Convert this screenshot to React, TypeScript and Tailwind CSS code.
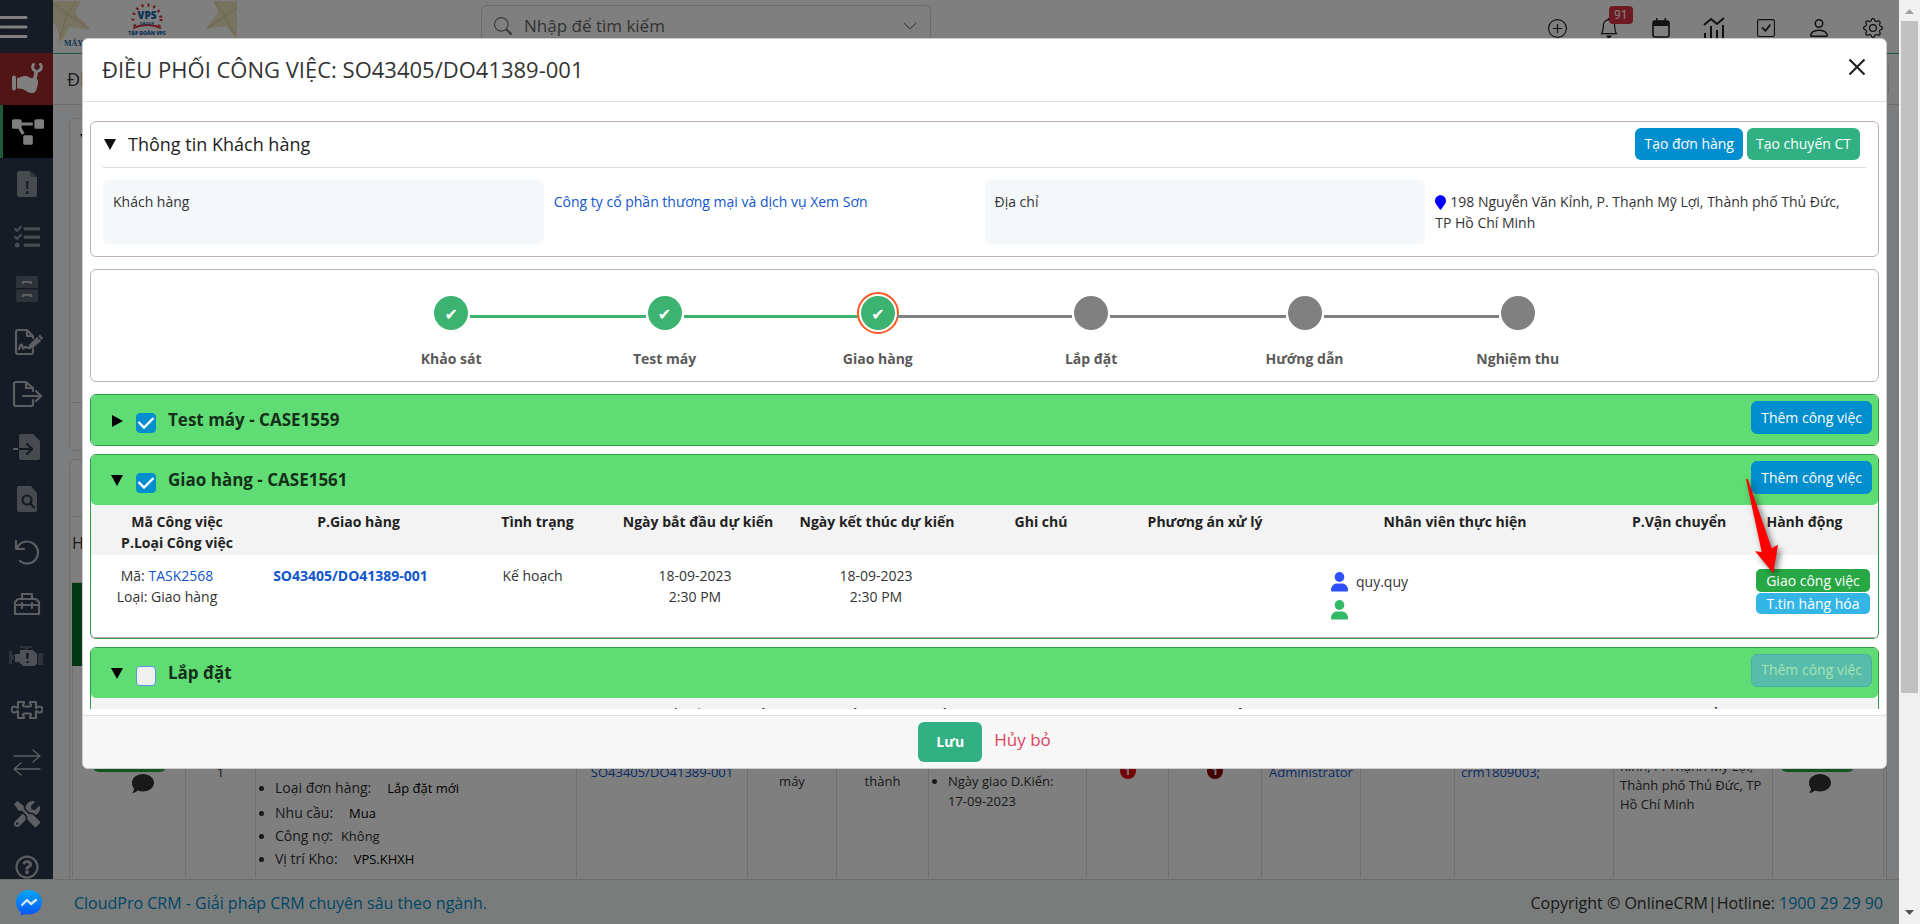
import type { ReactNode } from "react"
import { BsBell, BsCheckSquare, BsChevronDown, BsGear, BsPerson, BsPlusCircle, BsSearch } from "react-icons/bs"
import { FaMapMarker, FaProjectDiagram, FaRegQuestionCircle, FaTasks, FaTools } from "react-icons/fa"

const steps = [
  { label: "Khảo sát", done: true },
  { label: "Test máy", done: true },
  { label: "Giao hàng", done: true, current: true },
  { label: "Lắp đặt", done: false },
  { label: "Hướng dẫn", done: false },
  { label: "Nghiệm thu", done: false },
]

const line = {
  fill: "none",
  stroke: "currentColor",
  strokeWidth: 2.2,
  strokeLinecap: "round" as const,
  strokeLinejoin: "round" as const,
}

function Glyph({ children }: { children: ReactNode }) {
  return (
    <svg className="h-8 w-8" viewBox="0 0 32 32" aria-hidden="true">
      {children}
    </svg>
  )
}

const menu: { name: string; icon: ReactNode }[] = [
  {
    name: "Cảnh báo",
    icon: (
      <Glyph>
        <path fill="currentColor" d="M8 3h11l1 6h6v18a2 2 0 0 1-2 2H8a2 2 0 0 1-2-2V5a2 2 0 0 1 2-2z" opacity=".7" />
        <path fill="currentColor" d="M20 3l6 6h-6z" opacity=".4" />
        <path fill="#2a384a" d="M15 13h2.500l-.5 8h-1.500zM16.200 23a1.500 1.500 0 1 1 0 3 1.500 1.500 0 0 1 0-3z" />
      </Glyph>
    ),
  },
  { name: "Công việc", icon: <FaTasks className="h-[26px] w-[26px] opacity-70" /> },
  {
    name: "Lưu trữ",
    icon: (
      <Glyph>
        <path fill="currentColor" opacity=".35" d="M7 3h18a2 2 0 0 1 2 2v10H5V5a2 2 0 0 1 2-2zM5 16.500h22V27a2 2 0 0 1-2 2H7a2 2 0 0 1-2-2z" />
        <path d="M12 11V9h8v2M12 24v-2h8v2" {...line} strokeLinecap="butt" />
      </Glyph>
    ),
  },
  {
    name: "Hợp đồng",
    icon: (
      <Glyph>
        <path d="M22 23v3a2 2 0 0 1-2 2H7a2 2 0 0 1-2-2V6a2 2 0 0 1 2-2h9l6 6v2M16 4v6h6M8 23c2-6 3-5 3.500-2s1.500 1 2.500 0 2 1 4 1" {...line} />
        <path fill="currentColor" d="M18 19l8-8 4 4-8 7-4 1zM27 10l2-1.500L32 12l-1.500 2z" />
      </Glyph>
    ),
  },
  {
    name: "Xuất",
    icon: (
      <Glyph>
        <path d="M22 22v4a2 2 0 0 1-2 2H5a2 2 0 0 1-2-2V6a2 2 0 0 1 2-2h10l7 6v3M15 4v6h7M12 18h17M25 13l5 5-5 5" {...line} />
      </Glyph>
    ),
  },
  {
    name: "Nhập",
    icon: (
      <Glyph>
        <path fill="currentColor" opacity=".7" d="M10 3h12l7 7v17a2 2 0 0 1-2 2H10a2 2 0 0 1-2-2V5a2 2 0 0 1 2-2z" />
        <path d="M3 18h5" {...line} />
        <path d="M8 18h12M16 13l5 5-5 5" {...line} stroke="#2a384a" />
      </Glyph>
    ),
  },
  {
    name: "Tra cứu",
    icon: (
      <Glyph>
        <path fill="currentColor" opacity=".7" d="M8 3h12l6 7v17a2 2 0 0 1-2 2H8a2 2 0 0 1-2-2V5a2 2 0 0 1 2-2z" />
        <circle cx="16" cy="17" r="4.500" {...line} stroke="#2a384a" />
        <path d="M19.500 20.500l3.500 4" {...line} stroke="#2a384a" />
      </Glyph>
    ),
  },
  {
    name: "Hoàn tác",
    icon: (
      <Glyph>
        <path d="M5 5v8h8M6 12a11 11 0 1 1 3 13" {...line} />
      </Glyph>
    ),
  },
  {
    name: "Thiết bị",
    icon: (
      <Glyph>
        <path d="M4 17v-3l3-3h18l3 3v12H4V17h24M11 11V6h10v5M11 15v5M21 15v5" {...line} />
      </Glyph>
    ),
  },
  {
    name: "Sự cố",
    icon: (
      <svg className="h-8 w-9" viewBox="-2 0 36 32">
        <path fill="currentColor" opacity=".8" d="M9 9h13l4 4v10l-3 2H12l-4-4H4v-8h5z" />
        <path fill="currentColor" opacity=".35" d="M-2 10h3v4h2v5H1v4h-3zM9 5h12v2h-4v2h-3V7H9zM27 12h5v12h-5z" />
        <path fill="#2a384a" d="M15 12h3l-.5 6h-2zM15.500 20h2v2h-2z" />
      </svg>
    ),
  },
  {
    name: "Tiện ích",
    icon: (
      <Glyph>
        <path d="M7 9h6c0 2-1 2-1 3.500s8 1.500 8 0S19 11 19 9h6v6c1 0 2-1.500 3.500-1.500s3 1 3 3-1.500 3-3 3S26 18 25 18v7h-6c0-2 1-2 1-3.500s-8-1.500-8 0 1 1.500 1 3.500H7v-7c-1 0-2 1.500-3.500 1.500s-3-1-3-3 1.500-3 3-3S6 15 7 15z" {...line} />
      </Glyph>
    ),
  },
  {
    name: "Chuyển đổi",
    icon: (
      <Glyph>
        <path d="M3 10h26M22 4l7 6-7 6M29 23H3M10 17l-7 6 7 6" {...line} strokeWidth={1.300} />
      </Glyph>
    ),
  },
  { name: "Cài đặt", icon: <FaTools className="h-[26px] w-[26px]" /> },
  { name: "Trợ giúp", icon: <FaRegQuestionCircle className="h-6 w-6" /> },
]

function Sidebar() {
  return (
    <nav className="-mb-3.5 flex w-[53px] shrink-0 flex-col bg-[#2a384a] text-[#b9bdc2]">
      <button aria-label="Menu" className="flex h-[53px] shrink-0 items-center">
        <svg className="h-6 w-7" viewBox="0 0 28 24">
          <path stroke="#fff" strokeWidth="3" strokeLinecap="round" d="M1 2.500h25M1 12h25M1 21.500h25" />
        </svg>
      </button>
      <a href="#service" aria-label="Dịch vụ" className="flex h-[52px] shrink-0 items-center justify-center bg-[#a52a2a]">
        <svg className="h-8 w-8" viewBox="0 0 32 32" fill="#fff">
          <rect x="1" y="12.500" width="4" height="15" rx="2" />
          <path d="M6 15c4-1 6-2.500 9-2 2 .3 3 1.500 5 2 2 .4 5-.5 6 1s1.500 3 1 4.500c-.5 2-1 5-2 7-.8 1.800-3 3-5 2.500-3-.6-5-2-7.500-3.500-2-.8-4.500-.8-6.500-1z" />
          <path d="M22.500 1.500a4.300 4.300 0 1 0 7 0" fill="none" stroke="#fff" strokeWidth="3" strokeLinecap="round" />
          <path d="M25.500 8l-2 9" stroke="#fff" strokeWidth="3.600" />
        </svg>
      </a>
      <a href="#dispatch" aria-label="Điều phối" className="flex h-[53px] shrink-0 items-center justify-center border-l-3 border-[#3cb371] bg-black text-white">
        <FaProjectDiagram className="h-8 w-8" />
      </a>
      {menu.map((item) => (
        <a key={item.name} href="#menu" aria-label={item.name} className="flex min-h-0 flex-1 items-center justify-center">
          {item.icon}
        </a>
      ))}
    </nav>
  )
}

function Logo() {
  return (
    <svg className="h-[52px] w-[188px]" viewBox="0 0 188 52">
      <g fill="#f0e4c0">
        <path d="M0 1h28l-6 12 16 17-22-3-8 16-5-17-3-4z" />
        <path d="M184 1h-23l4 12-12 16 20-3 11 12z" />
      </g>
      <path d="M2 4l12 10 8-12M14 14L6 40M14 14l22 14M184 8l-12 8-10-14M172 16l-18 12M172 16l10 20" stroke="#dccb98" fill="none" />
      <circle cx="94" cy="19" r="14" fill="none" stroke="#d8303a" strokeWidth="3" strokeDasharray="2 4" />
      <path fill="#fff" d="M78 26h32v10H78z" />
      <path d="M80 28q14-6 28 0" fill="none" stroke="#d8303a" strokeWidth="2" />
      <text x="94" y="19" textAnchor="middle" fontFamily="Open Sans, sans-serif" fontSize="10" fontWeight="800" fill="#1464ac">VPS</text>
      <text x="94" y="25" textAnchor="middle" fontFamily="Open Sans, sans-serif" fontSize="4" fontWeight="700" fill="#1464ac">GROUP</text>
      <text x="94" y="35" textAnchor="middle" fontFamily="Open Sans, sans-serif" fontSize="5" fontWeight="800" fill="#1464ac">TẬP ĐOÀN VPS</text>
      <text x="11" y="46" fontFamily="Liberation Serif, serif" fontSize="8" fontWeight="700" fill="#1464ac">MÁY</text>
    </svg>
  )
}

function TopBar() {
  return (
    <header className="flex h-[54px] shrink-0 items-start justify-between border-b border-[#3cb371] bg-white">
      <Logo />
      <div className="mt-[5px] mr-auto ml-60 flex h-[42px] w-[450px] items-center gap-3 rounded-md border border-[#d5d5d5] px-3 text-[#777]">
        <BsSearch className="h-[18px] w-[18px]" />
        <input aria-label="Tìm kiếm" placeholder="Nhập để tìm kiếm" className="min-w-0 flex-1 text-[17px] outline-none placeholder:text-[#666]" />
        <BsChevronDown className="h-4 w-4" />
      </div>
      <div className="mt-4 mr-4 flex w-[335px] items-center justify-between text-[#222]">
        <button aria-label="Thêm"><BsPlusCircle className="h-[19px] w-[19px]" /></button>
        <button aria-label="Thông báo" className="relative">
          <BsBell className="h-5 w-5" />
          <span className="absolute -top-3 left-2.5 rounded-sm bg-[#dc3545] px-[5px] font-[Roboto] text-xs leading-[18px] text-white">91</span>
        </button>
        <button aria-label="Lịch">
          <svg className="h-5 w-5" viewBox="0 0 20 20">
            <path d="M2 5a2 2 0 0 1 2-2h12a2 2 0 0 1 2 2v12a2 2 0 0 1-2 2H4a2 2 0 0 1-2-2z" fill="none" stroke="currentColor" strokeWidth="1.600" />
            <path d="M2 3h16v5H2zM5 0h1.500v3H5zM13.500 0H15v3h-1.500z" fill="currentColor" />
          </svg>
        </button>
        <button aria-label="Báo cáo">
          <svg className="h-[22px] w-[22px]" viewBox="0 0 22 22" fill="none" stroke="currentColor">
            <path d="M1 8l7-6 6 5 7-6" strokeWidth="2" />
            <path d="M2 16v5M8 9v12M14 13v8M20 8v13" strokeWidth="2" />
          </svg>
        </button>
        <button aria-label="Việc cần làm"><BsCheckSquare className="h-[18px] w-[18px]" /></button>
        <button aria-label="Tài khoản"><BsPerson className="h-6 w-6" /></button>
        <button aria-label="Cấu hình"><BsGear className="h-5 w-5" /></button>
      </div>
    </header>
  )
}

function RowActions({ last }: { last?: boolean }) {
  return (
    <div className={`pt-[74px] ${last ? "pl-2" : "pl-5"}`}>
      <div className="h-8 w-[73px] rounded-md bg-[#28a745]" />
      <button aria-label="Bình luận" className={`mt-0.5 block ${last ? "ml-[28px]" : "ml-[39px]"}`}>
        <svg className="h-5 w-[22px] text-[#333]" viewBox="0 0 22 20" fill="currentColor">
          <path d="M11 0c6 0 11 3.800 11 8.700s-5 8.700-11 8.700c-1.800 0-3.500-.3-5-.9C4.500 17.600 2.500 19 .3 19c.8-1.200 1.700-2.700 1.700-4.400C.7 13 0 11 0 8.700 0 3.800 5 0 11 0z" />
        </svg>
      </button>
    </div>
  )
}

function OrderList() {
  return (
    <main className="flex min-h-0 flex-1 flex-col bg-[#f6fafe] text-[#333]">
      <div className="flex h-[51px] shrink-0 items-center justify-between border-b border-[#ddd] bg-white pr-2.5 pl-3.5">
        <h1 className="text-lg font-medium">ĐI</h1>
        <div className="h-[38px] w-28 rounded-md border border-[#ddd]" />
      </div>
      <div className="mt-[13px] mr-3 ml-4 flex h-[333px] shrink-0 flex-col justify-between rounded-md border border-[#ddd] bg-white">
        <svg className="mt-3.5 ml-2.5 h-3 w-3" viewBox="0 0 12 12"><path d="M0 1h12L6 12z" fill="#111" /></svg>
        <div className="ml-0.5 h-12 border-t border-[#ddd]" />
      </div>
      <div className="mt-2 mr-3 ml-4 flex min-h-0 flex-1 flex-col overflow-hidden rounded-t-md border-x border-t border-[#ddd] bg-white pr-[3px] pl-0.5">
        <div className="h-[57px] shrink-0 border-b border-[#ddd]" />
        <div className="h-[66px] shrink-0 border-b border-[#ddd] pt-3.5 text-base">H</div>
        <div className="h-[83px] shrink-0 bg-[#067028]" />
        <table className="h-[211px] w-full table-fixed text-[13px]">
          <colgroup>
            <col className="w-[113px]" />
            <col className="w-[70px]" />
            <col className="w-[321px]" />
            <col className="w-[171px]" />
            <col className="w-[89px]" />
            <col className="w-[92px]" />
            <col className="w-[158px]" />
            <col className="w-[82px]" />
            <col className="w-[93px]" />
            <col className="w-[99px]" />
            <col className="w-[94px]" />
            <col className="w-[159px]" />
            <col className="w-[159px]" />
            <col className="w-[111px]" />
          </colgroup>
          <tbody>
            <tr className="align-top *:border-x *:border-[#ddd]">
              <td><RowActions /></td>
              <td className="pt-[96px] text-center leading-5">1</td>
              <td>
                <ul className="list-disc pt-[111px] pl-[19px] leading-[23px]">
                  <li className="mb-0.5"><span className="mr-4 text-sm font-medium">Loại đơn hàng:</span><span className="text-black">Lắp đặt mới</span></li>
                  <li><span className="mr-4 text-sm font-medium">Nhu cầu:</span><span className="text-black">Mua</span></li>
                  <li><span className="mr-2 text-sm font-medium">Công nợ:</span>Không</li>
                  <li><span className="mr-4 text-sm font-medium">Vị trí Kho:</span><span className="text-black">VPS.KHXH</span></li>
                </ul>
              </td>
              <td className="pt-[96px] text-center leading-5"><a href="#order" className="text-[#1155cc]">SO43405/DO41389-001</a></td>
              <td className="pt-[105px] text-center leading-5">máy</td>
              <td className="pt-[105px] text-center leading-5">thành</td>
              <td>
                <ul className="list-disc pt-[105px] pl-[19px] leading-5">
                  <li>Ngày giao D.Kiến:<br />17-09-2023</li>
                </ul>
              </td>
              <td className="pt-[97px]"><span className="mx-auto block w-4 rounded-full bg-red-600 text-center text-[11px] leading-4 font-bold text-white">1</span></td>
              <td className="pt-[97px]"><span className="mx-auto block w-4 rounded-full bg-[#8b0000] text-center text-[11px] leading-4 font-bold text-white">1</span></td>
              <td className="pt-[96px] text-center leading-5"><a href="#user" className="text-[#1155cc]">Administrator</a></td>
              <td />
              <td className="pt-[96px] pl-1.5 leading-5"><a href="#case" className="text-[#1155cc]">crm1809003;</a></td>
              <td className="px-1.5 pt-[91px] leading-[19px]">Kỉnh, P. Thạnh Mỹ Lợi, Thành phố Thủ Đức, TP Hồ Chí Minh</td>
              <td><RowActions last /></td>
            </tr>
          </tbody>
        </table>
      </div>
    </main>
  )
}

function Footer() {
  return (
    <footer className="relative flex h-[45px] shrink-0 items-center border-t border-[#ddd] bg-[#f3f8f6] pt-0.5 pr-4 pl-4 text-base text-[#333]">
      <a href="#messenger" aria-label="Messenger" className="z-20 mr-8">
        <svg className="h-[26px] w-[26px]" viewBox="0 0 26 26">
          <defs>
            <linearGradient id="messenger" x1="0" y1="0" x2="0" y2="1">
              <stop offset="0" stopColor="#00a6f5" />
              <stop offset="1" stopColor="#0a55f5" />
            </linearGradient>
          </defs>
          <path fill="url(#messenger)" d="M13 0c7.300 0 13 5.300 13 12.200S20.300 24.400 13 24.400c-1.300 0-2.600-.2-3.700-.5L5 25.700l-.3-3.500C1.800 20 0 16.400 0 12.200 0 5.300 5.700 0 13 0z" />
          <path fill="none" stroke="#d8e4ec" strokeWidth="2.400" strokeLinecap="round" strokeLinejoin="round" d="M6 15l5-5 4 4 5-4" />
        </svg>
      </a>
      <a href="#cloudpro" className="text-[#008ecf]">CloudPro CRM - Giải pháp CRM chuyên sâu theo ngành.</a>
      <span className="ml-auto">Copyright © OnlineCRM|Hotline: <a href="tel:1900292990" className="text-[#008ecf]">1900 29 29 90</a></span>
    </footer>
  )
}

function CustomerPanel() {
  return (
    <section className="rounded-md border border-[#bfb0b5] px-3 pb-3">
      <div className="flex h-[46px] items-center border-b border-[#ddd] pr-1.5 pb-0.5">
        <svg className="ml-px h-3 w-3" viewBox="0 0 12 12"><path d="M0 1h12L6 12z" fill="#111" /></svg>
        <h3 className="ml-3 text-lg font-medium text-[#222]">Thông tin Khách hàng</h3>
        <button className="mr-1 ml-auto h-8 rounded-md bg-[#008ecf] px-[9px] text-sm font-medium text-white">Tạo đơn hàng</button>
        <button className="h-8 rounded-md bg-[#31b083] px-[9px] text-sm font-medium text-white">Tạo chuyến CT</button>
      </div>
      <div className="mt-3 grid min-h-[62px] grid-cols-4 text-sm leading-[21px] text-[#333] *:px-2.5 *:py-[11px]">
        <div className="rounded-md bg-[#f4f8fb]">Khách hàng</div>
        <div><a href="#customer" className="text-[#1155cc]">Công ty cổ phần thương mại và dịch vụ Xem Sơn</a></div>
        <div className="rounded-md bg-[#f4f8fb]">Địa chỉ</div>
        <div>
          <FaMapMarker className="mr-1 inline h-[15px] w-[11px] -translate-y-px text-[#0000ff]" />
          198 Nguyễn Văn Kỉnh, P. Thạnh Mỹ Lợi, Thành phố Thủ Đức, TP Hồ Chí Minh
        </div>
      </div>
    </section>
  )
}

function Stepper() {
  return (
    <section className="mt-3 rounded-md border border-[#bfb0b5] pt-[26px] pb-3">
      <ol className="mx-auto grid max-w-7xl grid-cols-6">
        {steps.map((step, i) => (
          <li key={step.label} className="flex flex-col items-center">
            <div className="flex w-full items-center gap-0.5">
              <span className={`mt-1.5 h-[3px] flex-1 ${i === 0 ? "" : step.done ? "bg-[#3cb371]" : "bg-[#808080]"}`} />
              <span
                className={`flex h-[34px] w-[34px] items-center justify-center rounded-full text-white ${
                  step.done ? "bg-[#3cb371]" : "bg-[#808080]"
                } ${step.current ? "ring-3 ring-white outline-2 outline-offset-2 outline-[#ff5722]" : ""}`}
              >
                {step.done && <span className="pt-1 font-['DejaVu_Sans'] text-base leading-none">✔</span>}
              </span>
              <span
                className={`mt-1.5 h-[3px] flex-1 ${
                  i === steps.length - 1 ? "" : steps[i + 1].done ? "bg-[#3cb371]" : "bg-[#808080]"
                }`}
              />
            </div>
            <span className="mt-[19px] text-sm leading-5 font-bold text-[#5a5a5a]">{step.label}</span>
          </li>
        ))}
      </ol>
    </section>
  )
}

type CaseProps = { title: string; open?: boolean; checked?: boolean; children?: ReactNode }

function CaseSection({ title, open, checked, children }: CaseProps) {
  return (
    <section className="relative mt-2 rounded-md border border-[#2f9a48] bg-white">
      <div className="flex h-[50px] rounded-[5px] bg-[#60dc74] pr-1.5 pl-5">
        <svg className="mt-5 h-3 w-3" viewBox="0 0 12 12">
          <path d={open ? "M0 0h12L6 11z" : "M1 0l11 6-11 6z"} fill="#000" />
        </svg>
        <label className="ml-[13px] flex gap-3">
          <span className="relative mt-[18px] h-5 w-5">
            <input
              type="checkbox"
              defaultChecked={checked}
              className="peer block h-5 w-5 appearance-none rounded border border-[#5a96e8] bg-[#efefef] checked:border-[#008ecf] checked:bg-[#008ecf]"
            />
            <svg className="pointer-events-none absolute inset-0 hidden h-5 w-5 peer-checked:block" viewBox="0 0 20 20">
              <path d="M2.500 9l5.500 5.500L17.500 5" fill="none" stroke="#fff" strokeWidth="2.400" />
            </svg>
          </span>
          <span className="mt-[13px] text-[17px] leading-6 font-bold text-[#15301a]">{title}</span>
        </label>
        <button
          disabled={!checked}
          className="mt-1.5 ml-auto h-[33px] rounded-md border border-[#008ecf] bg-[#008ecf] px-[9px] text-sm text-white disabled:border-[#4bb0a5] disabled:bg-[#58bcaa] disabled:text-[#a5e4b3]"
        >
          Thêm công việc
        </button>
      </div>
      {children}
    </section>
  )
}

function TaskTable({ children }: { children?: ReactNode }) {
  return (
    <table className="w-full table-fixed text-sm leading-[21px] text-[#333]">
      <colgroup>
        <col className="w-[172px]" />
        <col className="w-[191px]" />
        <col className="w-[167px]" />
        <col className="w-[154px]" />
        <col className="w-[204px]" />
        <col className="w-[124px]" />
        <col className="w-[204px]" />
        <col className="w-[296px]" />
        <col className="w-[152px]" />
        <col className="w-[123px]" />
      </colgroup>
      <thead>
        <tr className="bg-[#f3f3f3] align-top text-[#222] *:pt-1.5 *:pb-0.5 *:font-bold *:whitespace-nowrap">
          <th>Mã Công việc<br />P.Loại Công việc</th>
          <th>P.Giao hàng</th>
          <th>Tình trạng</th>
          <th>Ngày bắt đầu dự kiến</th>
          <th>Ngày kết thúc dự kiến</th>
          <th>Ghi chú</th>
          <th>Phương án xử lý</th>
          <th>Nhân viên thực hiện</th>
          <th>P.Vận chuyển</th>
          <th className="pr-6">Hành động</th>
        </tr>
      </thead>
      {children}
    </table>
  )
}

function UserMark({ className }: { className: string }) {
  return (
    <svg className={`h-5 w-[17px] ${className}`} viewBox="0 0 17 20" fill="currentColor">
      <ellipse cx="8.500" cy="5" rx="4.800" ry="5" />
      <path d="M0 18c0-4 3-6.500 6-6.500h5c3 0 6 2.500 6 6.500 0 1-.5 1.500-1.500 1.500h-14C.5 19.500 0 19 0 18z" />
    </svg>
  )
}

function DeliveryTasks() {
  return (
    <TaskTable>
      <tbody>
        <tr className="h-[82px] border-b border-[#bfb0b5] text-center align-top *:pt-2.5">
          <td className="pr-5">Mã: <a href="#task" className="text-[#1155cc]">TASK2568</a><br />Loại: Giao hàng</td>
          <td className="pr-4"><a href="#order" className="font-bold text-[#1155cc]">SO43405/DO41389-001</a></td>
          <td className="pr-2.5">Kế hoạch</td>
          <td className="pr-1.5">18-09-2023<br />2:30 PM</td>
          <td className="pr-0.5">18-09-2023<br />2:30 PM</td>
          <td />
          <td />
          <td className="pl-6">
            <div className="mt-1.5 flex items-center gap-2">
              <UserMark className="text-[#304ffe]" />
              quy.quy
            </div>
            <div className="mt-2 flex">
              <UserMark className="text-[#33b866]" />
            </div>
          </td>
          <td />
          <td>
            <div className="mt-1 flex flex-col gap-px pr-2 pl-px text-sm text-white">
              <button className="h-[23px] rounded-[5px] bg-[#28a745] leading-[22px] font-medium">Giao công việc</button>
              <button className="h-[21px] rounded-[5px] bg-[#33b5e5] leading-5 font-medium">T.tin hàng hóa</button>
            </div>
          </td>
        </tr>
      </tbody>
    </TaskTable>
  )
}

function DispatchDialog() {
  return (
    <div className="absolute inset-0 z-10 bg-black/50 pt-[38px] pr-3 pl-[82px]">
      <div role="dialog" aria-label="Điều phối công việc" className="flex flex-col overflow-hidden rounded-md border border-[#ccc] bg-white">
        <div className="flex h-[63px] items-center justify-between border-b border-[#e0e0e0] pr-5 pb-0.5 pl-[19px]">
          <h2 className="text-[22px] font-medium text-[#333]">ĐIỀU PHỐI CÔNG VIỆC: SO43405/DO41389-001</h2>
          <button aria-label="Đóng" className="-mt-1">
            <svg className="h-[18px] w-[18px]" viewBox="0 0 18 18">
              <path d="M1.500 1.500l15 15M16.500 1.500l-15 15" stroke="#222" strokeWidth="2.200" />
            </svg>
          </button>
        </div>
        <div className="max-h-[calc(100vh-317px)] overflow-hidden px-[7px] pt-[19px]">
          <CustomerPanel />
          <Stepper />
          <div className="pt-1">
            <CaseSection title="Test máy - CASE1559" checked />
            <CaseSection title="Giao hàng - CASE1561" open checked>
              <DeliveryTasks />
              {/* pointer to the assign button */}
              <svg className="pointer-events-none absolute top-5 right-[88px] h-[102px] w-[50px] drop-shadow-[3px_3px_3px_rgba(0,0,0,0.5)]" viewBox="0 0 50 102">
                <path fill="#f00" d="M6 4.300l1.700-.6 24 69.600 6.300-3.600-4.700 28.600L15 76.300l6.700.7z" />
              </svg>
            </CaseSection>
            <CaseSection title="Lắp đặt" open>
              <TaskTable />
            </CaseSection>
          </div>
        </div>
        <div className="mt-1.5 flex h-[53px] items-center justify-center gap-3 border-t border-[#e0e0e0] bg-[#f7f7f7]">
          <button className="h-10 w-16 rounded-md bg-[#31b083] text-sm font-bold text-white">Lưu</button>
          <a href="#cancel" className="pb-1 text-[17px] text-[#e0425f]">Hủy bỏ</a>
        </div>
      </div>
    </div>
  )
}

function ScrollRail() {
  return (
    <div className="flex w-[21px] shrink-0 flex-col items-center justify-between bg-[#f0f0f0] pt-2 pb-2">
      <svg className="h-[6px] w-[9px]" viewBox="0 0 9 6"><path d="M0 6l4.500-5L9 6z" fill="#a0a0a0" /></svg>
      <div className="mt-[7px] mb-auto h-[74%] w-[17px] bg-[#c1c1c1]" />
      <svg className="h-[6px] w-[9px]" viewBox="0 0 9 6"><path d="M0 0l4.500 5L9 0z" fill="#505050" /></svg>
    </div>
  )
}

export default function App() {
  return (
    <div className="flex h-screen overflow-hidden font-['Open_Sans','Noto_Sans',sans-serif]">
      <div className="relative flex min-w-0 flex-1 flex-col">
        <div className="flex min-h-0 flex-1">
          <Sidebar />
          <div className="flex min-w-0 flex-1 flex-col">
            <TopBar />
            <OrderList />
          </div>
        </div>
        <Footer />
        <DispatchDialog />
      </div>
      <ScrollRail />
    </div>
  )
}
